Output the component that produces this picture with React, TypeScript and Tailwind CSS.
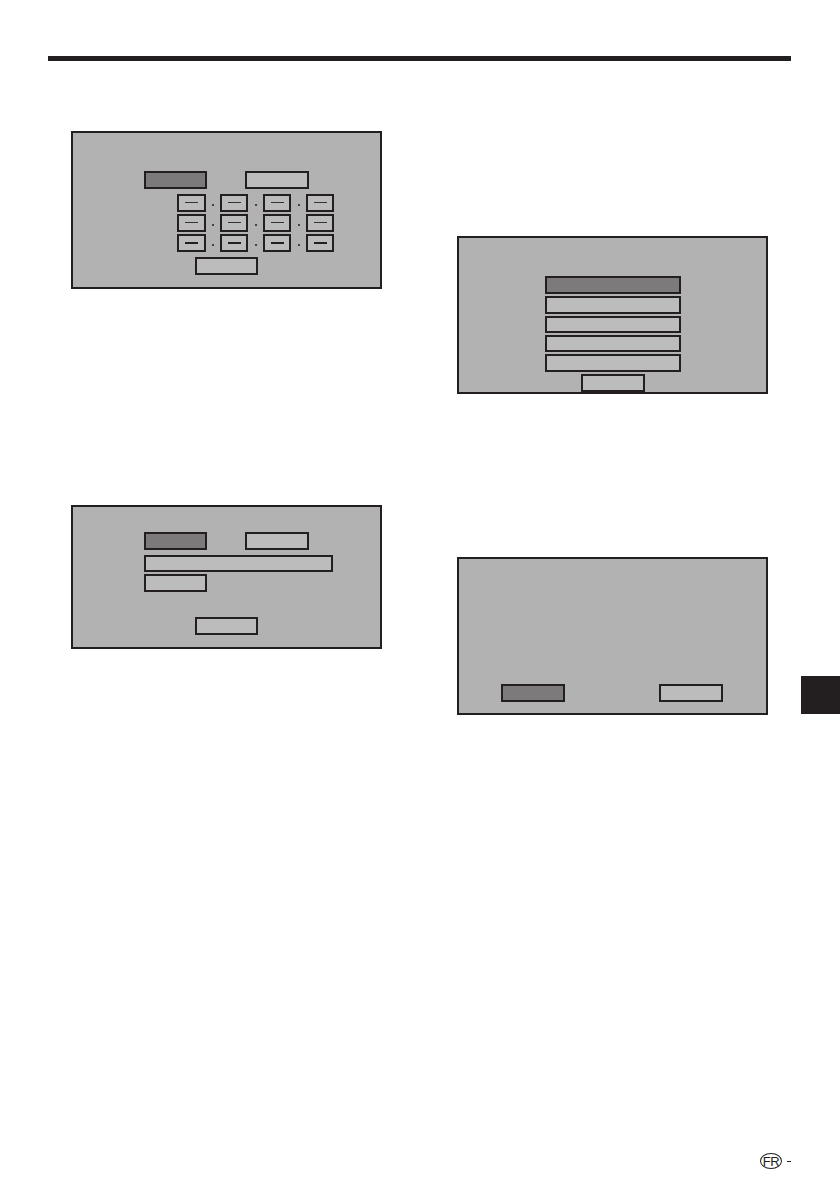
const LINE = "border-[#231f20]";

const Btn = ({ dark = false, w = "w-[63px]", h = "h-[18px]", className = "" }: { dark?: boolean; w?: string; h?: string; className?: string }) => (
  <div className={`${w} ${h} shrink-0 border-2 ${LINE} ${dark ? "bg-[#7d7a7b]" : "bg-[#bcbcbc]"} ${className}`} />
);

const Panel = ({ h, pt, children }: { h: string; pt: string; children: React.ReactNode }) => (
  <div className={`w-[311px] ${h} ${pt} border-2 ${LINE} bg-[#b2b2b2] flex flex-col`}>{children}</div>
);

// one row of the four-field address input
const AddrRow = ({ thick = false }: { thick?: boolean }) => {
  const box = (w: string) => (
    <div className={`${w} h-[18px] border-2 ${LINE} bg-[#bcbcbc] flex items-center justify-center`}>
      <div className={`w-[13px] ${thick ? "h-[2px] bg-[#231f20]" : "h-px bg-[#333]"} -mt-px`} />
    </div>
  );
  const dot = (w: string) => (
    <div className={`${w} h-[18px] flex items-center justify-center`}>
      <div className="w-[2px] h-[2px] mt-[3px] bg-[#444]" />
    </div>
  );
  return (
    <div className="flex ml-[104px]">
      {box("w-[29px]")}
      {dot("w-[14px]")}
      {box("w-[28px]")}
      {dot("w-[15px]")}
      {box("w-[28px]")}
      {dot("w-[15px]")}
      {box("w-[28px]")}
    </div>
  );
};

export default function App() {
  return (
    <div className="w-[840px] h-[1192px] bg-white flex flex-col font-['Liberation_Sans',sans-serif]">
      {/* header rule */}
      <div className="mt-[56px] ml-[48px] w-[743px] h-[5px] bg-[#231f20]" />

      <div className="flex pl-[71px]">
        {/* left column */}
        <div className="flex flex-col pt-[70px] gap-[216px]">
          <Panel h="h-[158px]" pt="pt-[38px]">
            <div className="flex ml-[71px] gap-[38px]">
              <Btn dark />
              <Btn w="w-[64px]" />
            </div>
            <div className="flex flex-col gap-[2px] mt-[5px]">
              <AddrRow />
              <AddrRow />
              <AddrRow thick />
            </div>
            <Btn className="ml-[122px] mt-[5px]" />
          </Panel>

          <Panel h="h-[144px]" pt="pt-[25px]">
            <div className="flex ml-[71px] gap-[38px]">
              <Btn dark />
              <Btn w="w-[64px]" />
            </div>
            <Btn w="w-[189px]" h="h-[17px]" className="ml-[71px] mt-[5px]" />
            <Btn className="ml-[71px] mt-[2px]" />
            <Btn className="ml-[122px] mt-[25px]" />
          </Panel>
        </div>

        {/* right column */}
        <div className="flex flex-col ml-[75px] pt-[175px] gap-[163px]">
          <Panel h="h-[158px]" pt="pt-[38px]">
            <div className="flex flex-col gap-[2px] ml-[86px]">
              <Btn dark w="w-[136px]" />
              <Btn w="w-[136px]" />
              <Btn w="w-[136px]" h="h-[17px]" />
              <Btn w="w-[136px]" h="h-[17px]" />
              <Btn w="w-[136px]" />
            </div>
            <Btn w="w-[64px]" className="ml-[122px] mt-[2px]" />
          </Panel>

          <Panel h="h-[158px]" pt="pt-[125px]">
            <div className="flex ml-[42px] gap-[94px]">
              <Btn dark w="w-[64px]" />
              <Btn w="w-[64px]" />
            </div>
          </Panel>
        </div>

        {/* section thumb tab */}
        <div className="ml-[33px] mt-[615px] w-[39px] h-[38px] bg-[#231f20]" />
      </div>

      {/* footer language mark */}
      <div className="mt-auto mb-[23px] mr-[49px] flex items-center justify-end gap-[5px]">
        <div className="w-[22px] h-[16px] rounded-[50%] border border-[#231f20] flex items-center justify-center text-[13px] leading-none text-[#231f20] tracking-[-0.5px] font-['Liberation_Sans',sans-serif]">
          <span>FR</span>
        </div>
        <div className="w-[4px] h-px bg-[#231f20]" />
      </div>
    </div>
  );
}
